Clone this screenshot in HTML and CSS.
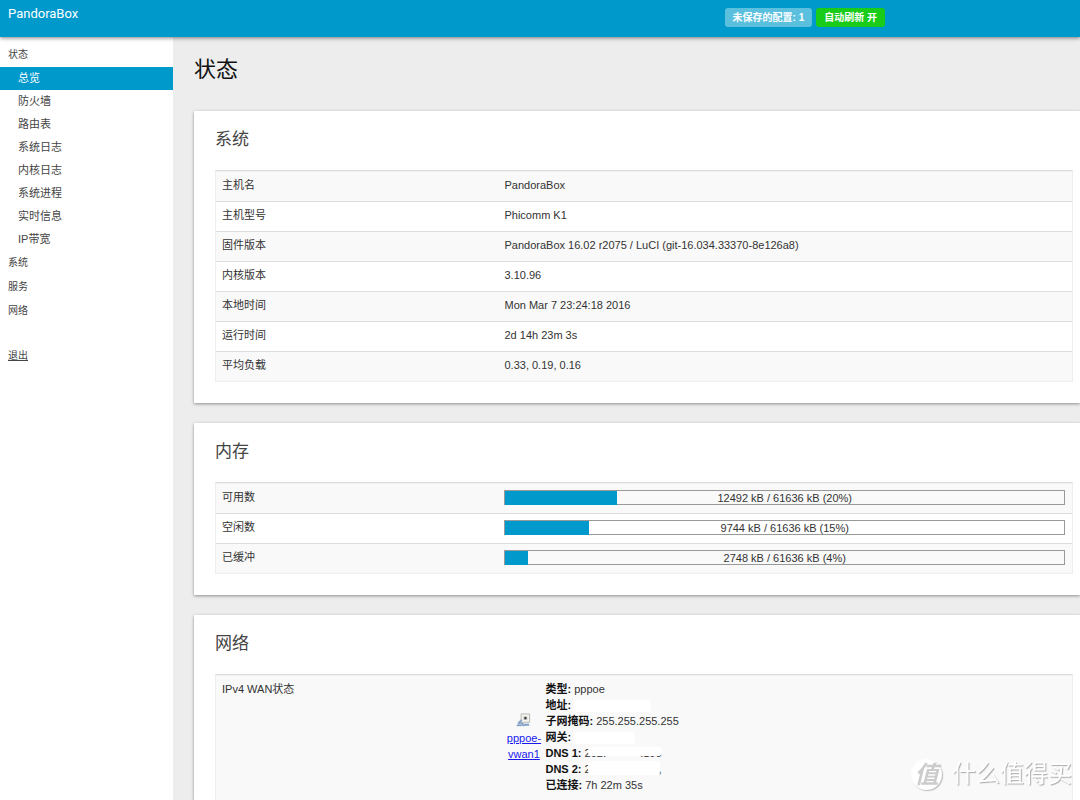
FILE: index.html
```html
<!DOCTYPE html>
<html lang="zh-CN">
<head>
<meta charset="utf-8">
<meta name="viewport" content="width=device-width, initial-scale=1">
<title>PandoraBox - LuCI</title>
<link rel="stylesheet" href="styles.css">
</head>
<body>
<header class="topbar">
  <a class="brand" href="#">PandoraBox</a>
  <div class="indicators">
    <a class="badge badge-info" href="#">未保存的配置: 1</a>
    <button class="badge badge-on" type="button">自动刷新 开</button>
  </div>
</header>
<div class="shell">
  <nav class="sidebar">
    <a class="group" href="#">状态</a>
    <a class="item active" href="#">总览</a>
    <a class="item" href="#">防火墙</a>
    <a class="item" href="#">路由表</a>
    <a class="item" href="#">系统日志</a>
    <a class="item" href="#">内核日志</a>
    <a class="item" href="#">系统进程</a>
    <a class="item" href="#">实时信息</a>
    <a class="item" href="#">IP带宽</a>
    <a class="group" href="#">系统</a>
    <a class="group" href="#">服务</a>
    <a class="group" href="#">网络</a>
    <a class="group logout" href="#">退出</a>
  </nav>
  <main class="content">
    <h1 class="page-title">状态</h1>
    <section class="card">
      <h2 class="card-title">系统</h2>
      <table class="info">
        <tr><th scope="row">主机名</th><td>PandoraBox</td></tr>
        <tr><th scope="row">主机型号</th><td>Phicomm K1</td></tr>
        <tr><th scope="row">固件版本</th><td>PandoraBox 16.02 r2075 / LuCI (git-16.034.33370-8e126a8)</td></tr>
        <tr><th scope="row">内核版本</th><td>3.10.96</td></tr>
        <tr><th scope="row">本地时间</th><td>Mon Mar 7 23:24:18 2016</td></tr>
        <tr><th scope="row">运行时间</th><td>2d 14h 23m 3s</td></tr>
        <tr><th scope="row">平均负载</th><td>0.33, 0.19, 0.16</td></tr>
      </table>
    </section>
    <section class="card">
      <h2 class="card-title">内存</h2>
      <table class="info">
        <tr><th scope="row">可用数</th><td><div class="meter"><div class="meter-fill" style="width:20%"></div><span class="meter-text">12492 kB / 61636 kB (20%)</span></div></td></tr>
        <tr><th scope="row">空闲数</th><td><div class="meter"><div class="meter-fill" style="width:15%"></div><span class="meter-text">9744 kB / 61636 kB (15%)</span></div></td></tr>
        <tr><th scope="row">已缓冲</th><td><div class="meter"><div class="meter-fill" style="width:4%"></div><span class="meter-text">2748 kB / 61636 kB (4%)</span></div></td></tr>
      </table>
    </section>
    <section class="card card-last">
      <h2 class="card-title">网络</h2>
      <table class="info">
        <tr class="wan-row">
          <th scope="row">IPv4 WAN状态</th>
          <td>
            <div class="wan">
              <div class="iface">
                <svg class="iface-icon" viewBox="0 0 16 16" aria-hidden="true">
                  <path d="M5.500 1.500h9v9h-9z" fill="#f4f4f0" stroke="#b3b3b0"/>
                  <path d="M8 4h4v4H8z" fill="#bbb"/>
                  <path d="M9 5h2v2H9z" fill="#222"/>
                  <path d="M6 8l-3 3 2 1" fill="none" stroke="#89a6cb" stroke-width="2"/>
                  <path d="M1 14l3-3 4 1-2 2z" fill="#a9c2df" stroke="#7795bb"/>
                  <path d="M7 14l3-1 4 0" fill="none" stroke="#7f9fc8" stroke-width="2"/>
                </svg>
                <a href="#">pppoe-vwan1</a>
              </div>
              <div class="wan-details">
                <div><b>类型:</b> pppoe</div>
                <div><b>地址:</b> <span class="blank blank-wide"></span></div>
                <div><b>子网掩码:</b> 255.255.255.255</div>
                <div><b>网关:</b> <span class="blank"></span></div>
                <div><b>DNS 1:</b> <span class="hidden-value first"><span>202.</span><span>.100</span></span></div>
                <div><b>DNS 2:</b> <span class="hidden-value second"><span>2</span><span>,</span></span></div>
                <div><b>已连接:</b> 7h 22m 35s</div>
              </div>
            </div>
          </td>
        </tr>
      </table>
    </section>
  </main>
</div>
<div class="watermark"><span class="seal">值</span><span>什么值得买</span></div>
</body>
</html>
```
FILE: styles.css
```css
* { box-sizing: border-box; }

body {
  margin: 0;
  min-height: 100vh;
  display: flex;
  flex-direction: column;
  background: #ededed;
  color: #333;
  font: 11px/16px "Liberation Sans", Arial, "Noto Sans CJK SC", sans-serif;
}

.topbar {
  position: relative;
  display: flex;
  align-items: flex-start;
  justify-content: space-between;
  height: 37px;
  padding: 0 195px 0 8px;
  background: #0099cc;
  box-shadow: 0 1px 4px rgba(0, 0, 0, 0.5);
}

.brand {
  color: #fff;
  font-family: Roboto, "Liberation Sans", sans-serif;
  font-size: 13px;
  line-height: 28px;
  text-decoration: none;
}

.indicators { display: flex; gap: 4px; padding-top: 8px; }

.badge {
  height: 19px;
  padding: 0 8px;
  border: 0;
  border-radius: 3px;
  color: #fff;
  font-family: inherit;
  font-size: 10px;
  font-weight: bold;
  line-height: 20px;
  text-decoration: none;
  white-space: nowrap;
}
.badge-info { background: #5bc0de; }
.badge-on { background: #19cc19; }

.shell { display: flex; flex: 1; }

.sidebar {
  display: flex;
  flex-direction: column;
  flex: 0 0 173px;
  padding-top: 6px;
  background: #fff;
}
.sidebar a { color: #444; text-decoration: none; }
.sidebar .group { padding-left: 8px; font-size: 10px; line-height: 24px; }
.sidebar .item { padding-left: 18px; line-height: 23px; }
.sidebar .active { background: #0099cc; color: #fff; }
.sidebar .logout { margin-top: 21px; text-decoration: underline; }

.content {
  display: flex;
  flex: 1;
  flex-direction: column;
  gap: 20px;
  min-width: 0;
  padding-left: 21px;
}

.page-title {
  margin: 0 0 -12px;
  color: #111;
  font-size: 22px;
  font-weight: normal;
  line-height: 66px;
}

.card {
  padding: 0 7px 21px 21px;
  background: #fff;
  box-shadow: 0 1px 3px rgba(0, 0, 0, 0.4);
}
.card-last { flex: 1; padding-bottom: 0; }

.card-title {
  margin: 0;
  padding-bottom: 1px;
  color: #444;
  font-size: 17px;
  font-weight: normal;
  line-height: 58px;
}

.info {
  width: 100%;
  border-collapse: separate;
  border-spacing: 0;
  border: 1px solid #eee;
  border-top-color: #ddd;
  table-layout: fixed;
}
.info th, .info td {
  height: 30px;
  padding: 0 7px 3px 6px;
  border-top: 1px solid #ddd;
  text-align: left;
}
.info tr:first-child th, .info tr:first-child td { border-top-color: #f0f0f0; }
.info tr:nth-child(odd) { background: #f9f9f9; }
.info th { width: 33%; font-weight: normal; }
.card-last .info { border-bottom: 0; }

.meter { position: relative; height: 15px; border: 1px solid #999; }
.meter-fill { height: 14px; background: #0099cc; }
.meter-text {
  position: absolute;
  inset: 0;
  line-height: 15px;
  text-align: center;
}

.info .wan-row th, .info .wan-row td { padding-top: 5px; vertical-align: top; }
.info .wan-row td { padding-bottom: 7px; }

.wan { display: flex; align-items: center; gap: 2px; }
.iface {
  display: flex;
  flex-direction: column;
  align-items: center;
  width: 39px;
  gap: 2px;
  text-align: center;
}
.iface a { color: #1a1aee; }
.iface-icon { width: 15px; height: 16px; }
.wan-details b { color: #111; }

.blank {
  display: inline-block;
  width: 61px;
  height: 12px;
  border-radius: 4px;
  background: #fff;
  vertical-align: middle;
}
.blank-wide { width: 77px; }

.hidden-value {
  position: relative;
  display: inline-flex;
  justify-content: space-between;
  width: 77px;
}
.hidden-value::after {
  content: "";
  position: absolute;
  left: 3px;
  right: 0;
  border-radius: 4px;
  background: #fff;
}
.first::after { top: 2px; height: 9px; }
.second::after { top: 0; height: 14px; right: 2px; }

.watermark {
  position: fixed;
  right: 8px;
  bottom: 10px;
  display: flex;
  align-items: center;
  gap: 10px;
  color: #fff;
  font-size: 24px;
  line-height: 32px;
  text-shadow: 1px 1px 1px #aaa;
}
.seal {
  width: 31px;
  height: 31px;
  border-radius: 50%;
  background: #fff;
  box-shadow: 1px 1px 1px #bbb;
  color: #ccc;
  font-style: italic;
  font-weight: bold;
  line-height: 31px;
  text-align: center;
  text-shadow: none;
}
```
